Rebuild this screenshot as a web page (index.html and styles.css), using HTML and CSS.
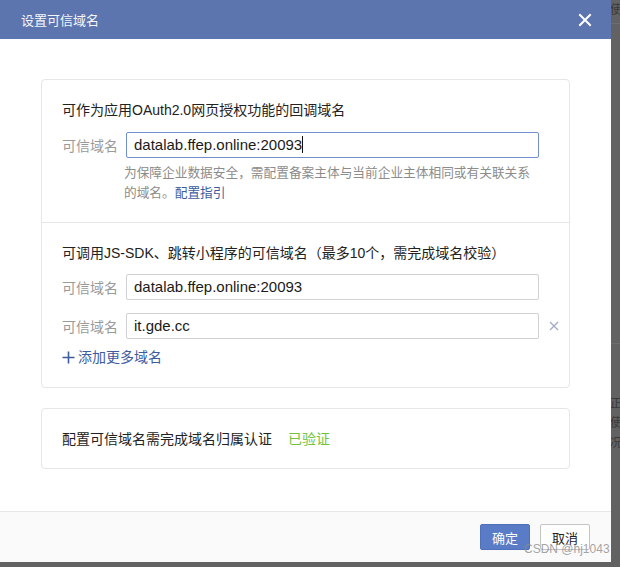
FILE: index.html
```html
<!DOCTYPE html>
<html lang="zh-CN">
<head>
    <meta charset="UTF-8">
    <title>设置可信域名</title>
    <link rel="stylesheet" href="styles.css">
</head>
<body>
    <div class="backdrop">
        <span class="bg-text t1">使用</span>
        <span class="bg-text t2">正书</span>
        <span class="bg-text t3">使证</span>
        <span class="bg-text t4">况。</span>
    </div>

    <div class="modal">
        <div class="modal-header">
            <span class="modal-title">设置可信域名</span>
            <span class="modal-close">
                <svg width="14" height="14" viewBox="0 0 14 14"><path d="M2 2 L12 12 M12 2 L2 12" stroke="#fff" stroke-width="2" stroke-linecap="square"/></svg>
            </span>
        </div>

        <div class="modal-body">
            <div class="card">
                <div class="section">
                    <div class="section-title">可作为应用OAuth2.0网页授权功能的回调域名</div>
                    <div class="field-row">
                        <label class="field-label">可信域名</label>
                        <div class="field-input active">datalab.ffep.online:20093<span class="caret"></span></div>
                        <span class="field-extra"></span>
                    </div>
                    <div class="field-tip">为保障企业数据安全，需配置备案主体与当前企业主体相同或有关联关系的域名。<a class="link">配置指引</a></div>
                </div>
                <div class="section">
                    <div class="section-title">可调用JS-SDK、跳转小程序的可信域名（最多10个，需完成域名校验）</div>
                    <div class="field-row">
                        <label class="field-label">可信域名</label>
                        <div class="field-input">datalab.ffep.online:20093</div>
                        <span class="field-extra"></span>
                    </div>
                    <div class="field-row">
                        <label class="field-label">可信域名</label>
                        <div class="field-input">it.gde.cc</div>
                        <span class="field-extra">
                            <svg width="10" height="10" viewBox="0 0 10 10"><path d="M1 1 L9 9 M9 1 L1 9" stroke="#a3acc6" stroke-width="1.3"/></svg>
                        </span>
                    </div>
                    <div class="add-more">
                        <svg class="plus" width="13" height="13" viewBox="0 0 13 13"><path d="M6.5 0.5 V12.5 M0.5 6.5 H12.5" stroke="#3c5c9e" stroke-width="1.6"/></svg>
                        添加更多域名
                    </div>
                </div>
            </div>

            <div class="card verify">
                配置可信域名需完成域名归属认证<span class="verified">已验证</span>
            </div>
        </div>

        <div class="modal-footer">
            <button class="btn btn-primary">确定</button>
            <button class="btn">取消</button>
        </div>
    </div>

    <div class="watermark">CSDN @hj1043</div>
</body>
</html>
```

FILE: styles.css
```css
body {
    margin: 0;
    width: 620px;
    height: 567px;
    overflow: hidden;
    background: #626262;
    font-family: "Liberation Sans", "Noto Sans CJK SC", sans-serif;
    position: relative;
}
.backdrop {
    position: absolute;
    inset: 0;
}
.backdrop::before {
    content: "";
    position: absolute;
    left: 611px;
    right: 0;
    top: 23px;
    border-top: 1px solid #6e6e6e;
}
.backdrop::after {
    content: "";
    position: absolute;
    left: 611px;
    right: 0;
    top: 343px;
    border-top: 1px solid #6e6e6e;
}
.bg-text {
    position: absolute;
    left: 610px;
    font-size: 12px;
    color: #3a3a3a;
    white-space: nowrap;
}
.t1 { top: 0; }
.t2 { top: 394px; }
.t3 { top: 413px; }
.t4 { top: 433px; }

.modal {
    position: relative;
    width: 611px;
    height: 562px;
    background: #fff;
    display: flex;
    flex-direction: column;
}
.modal-header {
    height: 39px;
    background: #5c75ae;
    display: flex;
    align-items: center;
    justify-content: space-between;
    padding: 0 19px 0 21px;
}
.modal-title {
    color: #f4f6fb;
    font-size: 13px;
}
.modal-close {
    display: flex;
}

.modal-body {
    flex: 1;
    padding: 40px 41px 0 41px;
}
.card {
    border: 1px solid #e4e6ea;
    border-radius: 4px;
    color: #222;
    font-size: 14px;
}
.section {
    padding: 20px 0 19px 20px;
}
.section + .section {
    border-top: 1px solid #e4e6ea;
    padding-bottom: 20px;
}
.section-title {
    line-height: 20px;
    margin-bottom: 12px;
}
.section + .section .section-title {
    margin-bottom: 11px;
}
.field-row {
    display: flex;
    align-items: center;
    margin-bottom: 13px;
}
.field-label {
    width: 64px;
    color: #9a9a9a;
    font-size: 14px;
}
.field-input {
    flex: 1;
    height: 24px;
    line-height: 24px;
    border: 1px solid #cfd1d4;
    border-radius: 2px;
    padding: 0 7px;
    font-size: 15px;
    color: #1a1a1a;
}
.field-input.active {
    border-color: #6f8fcf;
}
.caret {
    display: inline-block;
    width: 1px;
    height: 17px;
    background: #111;
    vertical-align: -3px;
}
.field-extra {
    width: 30px;
    display: flex;
    justify-content: center;
}
.field-tip {
    margin: -8px 31px 0 62px;
    color: #8c8c8c;
    font-size: 12.7px;
    line-height: 20px;
}
.link {
    color: #3c5c9e;
}
.add-more {
    display: flex;
    align-items: center;
    gap: 3px;
    color: #3c5c9e;
    font-size: 14px;
    line-height: 20px;
    margin-top: -5px;
}
.plus {
    display: block;
}

.verify {
    margin-top: 20px;
    padding: 20px 20px 19px;
    line-height: 20px;
}
.verified {
    color: #71c33e;
    margin-left: 16px;
}

.modal-footer {
    height: 50px;
    border-top: 1px solid #e6e6e6;
    background: #fafafa;
    display: flex;
    justify-content: flex-end;
    align-items: center;
    gap: 10px;
    padding-right: 21px;
}
.btn {
    height: 26px;
    width: 50px;
    border: 1px solid #c4c4c4;
    border-radius: 2px;
    background: #fff;
    font-family: "Liberation Sans", "Noto Sans CJK SC", sans-serif;
    font-size: 13px;
    color: #222;
    padding: 0;
}
.btn-primary {
    background: #5a7bc6;
    border-color: #4f70bb;
    color: #fff;
}

.watermark {
    position: absolute;
    left: 524px;
    top: 542px;
    font-size: 12px;
    color: rgba(140, 140, 140, 0.8);
}
```
